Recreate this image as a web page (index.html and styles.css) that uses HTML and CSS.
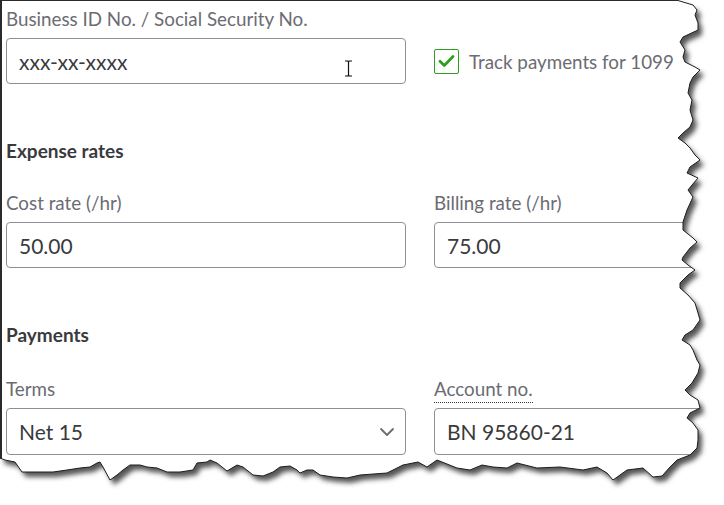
FILE: index.html
```html
<!DOCTYPE html>
<html lang="en">
<head>
<meta charset="utf-8">
<title>Vendor details</title>
<link rel="stylesheet" href="styles.css">
</head>
<body>
<div class="sheet">
  <form class="form">
    <div class="row row-first">
      <div class="field">
        <label class="label">Business ID No. / Social Security No.</label>
        <div class="input">
          <span class="value">xxx-xx-xxxx</span>
          <svg class="ibeam" width="9" height="17" viewBox="0 0 9 17"><path d="M1 1h2.5M5.5 1H8M4.5 1.5v14M1 16h2.5M5.5 16H8M3.5 1.2c.5 0 1 .3 1 .8M5.5 1.2c-.5 0-1 .3-1 .8M3.5 15.8c.5 0 1-.3 1-.8M5.5 15.8c-.5 0-1-.3-1-.8" fill="none" stroke="#111" stroke-width="1.2"/></svg>
        </div>
      </div>
      <div class="check-field">
        <span class="checkbox"><svg width="17" height="14" viewBox="0 0 17 14"><path d="M2 7.2l4.3 4.3L15 2.5" fill="none" stroke="#2ca01c" stroke-width="2.8" stroke-linecap="round" stroke-linejoin="round"/></svg></span>
        <span class="check-label">Track payments for 1099</span>
      </div>
    </div>

    <h2 class="section">Expense rates</h2>
    <div class="row row-rates">
      <div class="field">
        <label class="label">Cost rate (/hr)</label>
        <div class="input"><span class="value">50.00</span></div>
      </div>
      <div class="field">
        <label class="label">Billing rate (/hr)</label>
        <div class="input"><span class="value">75.00</span></div>
      </div>
    </div>

    <h2 class="section">Payments</h2>
    <div class="row row-pay">
      <div class="field">
        <label class="label">Terms</label>
        <div class="input select">
          <span class="value">Net 15</span>
          <svg class="chevron" width="16" height="10" viewBox="0 0 16 10"><path d="M2 2l6 6 6-6" fill="none" stroke="#6b6c72" stroke-width="1.8" stroke-linecap="round" stroke-linejoin="round"/></svg>
        </div>
      </div>
      <div class="field">
        <label class="label"><span class="dotted">Account no.</span></label>
        <div class="input"><span class="value">BN 95860-21</span></div>
      </div>
    </div>
  </form>

  <svg class="torn" width="724" height="505" viewBox="0 0 724 505" aria-hidden="true">
    <defs>
      <filter id="soft" x="-10%" y="-10%" width="120%" height="120%"><feGaussianBlur stdDeviation="2.6"/></filter>
      <clipPath id="outside"><path clip-rule="evenodd" d="M0 0H724V505H0Z M0 0L678 0 693 5 697 10 695 15 698 23 698 30 683 37 680 42 685 50 683 57 685 62 695 67 700 70 693 77 690 83 688 93 692 100 690 110 693 120 690 127 683 133 678 138 685 143 690 148 695 155 700 160 690 167 687 173 698 178 692 185 688 190 693 197 687 210 683 222 683 230 693 238 697 242 690 248 683 257 682 260 688 265 695 270 688 275 680 283 680 288 688 295 695 303 698 313 700 320 693 330 685 335 682 340 690 345 693 350 697 360 700 365 698 373 692 383 685 390 690 395 698 400 700 408 690 413 687 418 693 423 698 430 698 440 697 448 690 455 677 460 670 467 662 476 653 477 643 468 627 470 613 480 607 473 597 467 583 470 560 467 537 468 525 465 517 463 507 468 493 467 482 465 470 470 457 468 437 460 427 467 418 462 403 465 387 473 360 475 347 478 333 477 320 475 313 470 307 470 300 473 297 470 290 466 280 467 273 472 263 476 253 475 243 467 237 465 227 471 217 463 210 460 207 462 197 463 193 470 180 472 167 472 157 468 147 467 140 465 130 465 123 470 117 475 110 480 103 467 100 462 97 463 90 467 80 468 67 470 53 472 33 472 22 472 15 462 5 460 0 458Z"/></clipPath>
    </defs>
    <path fill="#fff" fill-rule="evenodd" d="M0 0H724V505H0Z M0 0L678 0 693 5 697 10 695 15 698 23 698 30 683 37 680 42 685 50 683 57 685 62 695 67 700 70 693 77 690 83 688 93 692 100 690 110 693 120 690 127 683 133 678 138 685 143 690 148 695 155 700 160 690 167 687 173 698 178 692 185 688 190 693 197 687 210 683 222 683 230 693 238 697 242 690 248 683 257 682 260 688 265 695 270 688 275 680 283 680 288 688 295 695 303 698 313 700 320 693 330 685 335 682 340 690 345 693 350 697 360 700 365 698 373 692 383 685 390 690 395 698 400 700 408 690 413 687 418 693 423 698 430 698 440 697 448 690 455 677 460 670 467 662 476 653 477 643 468 627 470 613 480 607 473 597 467 583 470 560 467 537 468 525 465 517 463 507 468 493 467 482 465 470 470 457 468 437 460 427 467 418 462 403 465 387 473 360 475 347 478 333 477 320 475 313 470 307 470 300 473 297 470 290 466 280 467 273 472 263 476 253 475 243 467 237 465 227 471 217 463 210 460 207 462 197 463 193 470 180 472 167 472 157 468 147 467 140 465 130 465 123 470 117 475 110 480 103 467 100 462 97 463 90 467 80 468 67 470 53 472 33 472 22 472 15 462 5 460 0 458Z"/>
    <g clip-path="url(#outside)">
      <path filter="url(#soft)" transform="translate(4 5)" fill="#555" d="M0 0L678 0 693 5 697 10 695 15 698 23 698 30 683 37 680 42 685 50 683 57 685 62 695 67 700 70 693 77 690 83 688 93 692 100 690 110 693 120 690 127 683 133 678 138 685 143 690 148 695 155 700 160 690 167 687 173 698 178 692 185 688 190 693 197 687 210 683 222 683 230 693 238 697 242 690 248 683 257 682 260 688 265 695 270 688 275 680 283 680 288 688 295 695 303 698 313 700 320 693 330 685 335 682 340 690 345 693 350 697 360 700 365 698 373 692 383 685 390 690 395 698 400 700 408 690 413 687 418 693 423 698 430 698 440 697 448 690 455 677 460 670 467 662 476 653 477 643 468 627 470 613 480 607 473 597 467 583 470 560 467 537 468 525 465 517 463 507 468 493 467 482 465 470 470 457 468 437 460 427 467 418 462 403 465 387 473 360 475 347 478 333 477 320 475 313 470 307 470 300 473 297 470 290 466 280 467 273 472 263 476 253 475 243 467 237 465 227 471 217 463 210 460 207 462 197 463 193 470 180 472 167 472 157 468 147 467 140 465 130 465 123 470 117 475 110 480 103 467 100 462 97 463 90 467 80 468 67 470 53 472 33 472 22 472 15 462 5 460 0 458Z"/>
    </g>
    <path fill="none" stroke="#1e1e1e" stroke-width="1" stroke-linejoin="round" d="M678 0.5L693 5 697 10 695 15 698 23 698 30 683 37 680 42 685 50 683 57 685 62 695 67 700 70 693 77 690 83 688 93 692 100 690 110 693 120 690 127 683 133 678 138 685 143 690 148 695 155 700 160 690 167 687 173 698 178 692 185 688 190 693 197 687 210 683 222 683 230 693 238 697 242 690 248 683 257 682 260 688 265 695 270 688 275 680 283 680 288 688 295 695 303 698 313 700 320 693 330 685 335 682 340 690 345 693 350 697 360 700 365 698 373 692 383 685 390 690 395 698 400 700 408 690 413 687 418 693 423 698 430 698 440 697 448 690 455 677 460 670 467 662 476 653 477 643 468 627 470 613 480 607 473 597 467 583 470 560 467 537 468 525 465 517 463 507 468 493 467 482 465 470 470 457 468 437 460 427 467 418 462 403 465 387 473 360 475 347 478 333 477 320 475 313 470 307 470 300 473 297 470 290 466 280 467 273 472 263 476 253 475 243 467 237 465 227 471 217 463 210 460 207 462 197 463 193 470 180 472 167 472 157 468 147 467 140 465 130 465 123 470 117 475 110 480 103 467 100 462 97 463 90 467 80 468 67 470 53 472 33 472 22 472 15 462 5 460 0 458"/>
    <rect x="0" y="0" width="678" height="1" fill="#2a2a2a"/>
    <rect x="0" y="0" width="2" height="459" fill="#2a2a2a"/>
  </svg>
</div>
</body>
</html>
```

FILE: styles.css
```css
* { box-sizing: border-box; }

html, body {
  margin: 0;
  padding: 0;
  background: #fff;
}

.sheet {
  position: relative;
  width: 724px;
  height: 505px;
  overflow: hidden;
  font-family: Lato, "Open Sans", sans-serif;
}

.form {
  margin: 0;
  padding: 7px 0 0 6px;
}

.row {
  display: grid;
  grid-template-columns: 400px 400px;
  column-gap: 28px;
}

.field {
  display: flex;
  flex-direction: column;
}

.label {
  display: block;
  font-size: 18.8px;
  line-height: 24px;
  height: 24px;
  margin-bottom: 7px;
  color: #6b6c72;
  white-space: nowrap;
}

.dotted {
  border-bottom: 1px dotted #393a3d;
  padding-bottom: 2px;
}

.input {
  position: relative;
  display: flex;
  align-items: center;
  height: 46px;
  padding: 0 12px;
  border: 1px solid #8d9096;
  border-radius: 4px;
  background: #fff;
}

.value {
  font-size: 21px;
  color: #393a3d;
}

.select {
  justify-content: space-between;
}

.chevron {
  margin-right: -2px;
}

.ibeam {
  position: absolute;
  left: 337px;
  top: 21px;
}

.check-field {
  align-self: end;
  height: 46px;
  display: flex;
  align-items: center;
  gap: 10px;
}

.checkbox {
  width: 25px;
  height: 25px;
  border: 1.5px solid #2ca01c;
  border-radius: 2px;
  display: flex;
  align-items: center;
  justify-content: center;
}

.check-label {
  font-size: 18.8px;
  color: #6b6c72;
}

.section {
  margin: 55px 0 28px;
  font-size: 19px;
  line-height: 24px;
  font-weight: 700;
  color: #393a3d;
}

.row-pay {
  padding-top: 2px;
}

.row-pay .input {
  height: 47px;
}

.torn {
  position: absolute;
  left: 0;
  top: 0;
  pointer-events: none;
}
```
